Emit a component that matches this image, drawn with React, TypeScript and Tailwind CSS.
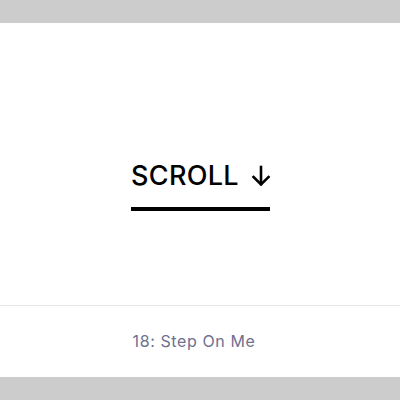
import React from "react";

export default function App() {
  return (
    <div className="flex h-[400px] w-[400px] flex-col bg-white" style={{ fontFamily: "Inter, 'Noto Sans', sans-serif" }}>
      <div className="h-[23px] bg-[#cccccc]" />
      <main className="flex flex-1 flex-col items-center pt-[133px]">
        <div className="flex h-[40px] items-center gap-[12px] pl-[2px] text-[27px] font-medium leading-[40px] tracking-[0.3px] text-black">
          <span>SCROLL</span>
          <svg width="20" height="22" viewBox="0 0 20 22" fill="none" stroke="black" strokeWidth="2.6" strokeLinecap="square">
            <path d="M10 2 V19" />
            <path d="M2.5 12 L10 19.5 L17.5 12" />
          </svg>
        </div>
        <div className="mt-[11px] h-[4px] w-[139px] bg-black" />
      </main>
      <footer className="flex h-[72px] items-center justify-center border-t border-[#e6e6e6] pb-[2px] pr-[12px] text-[16px] tracking-[0.6px] text-[#6e7190]">
        18: Step On Me
      </footer>
      <div className="h-[23px] bg-[#cccccc]" />
    </div>
  );
}
